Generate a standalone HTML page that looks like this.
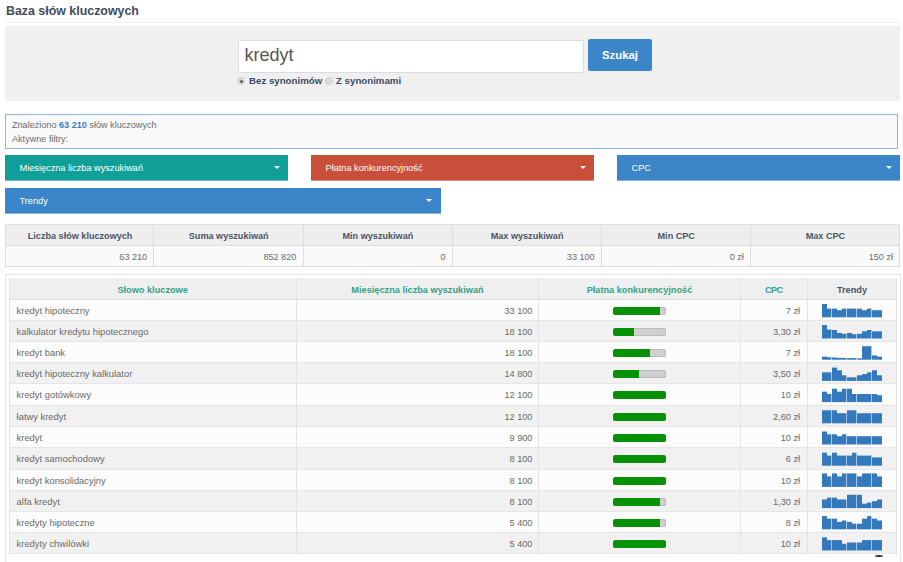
<!DOCTYPE html>
<html><head><meta charset="utf-8">
<style>
*{box-sizing:border-box;margin:0;padding:0}
html,body{width:903px;height:562px;overflow:hidden;background:#fff;font-family:"Liberation Sans",sans-serif;position:relative}
.abs{position:absolute}
.title{left:6px;top:2.5px;font-size:12.4px;font-weight:bold;color:#3d4b60;line-height:16px;white-space:nowrap}
.hr{left:5px;top:22px;width:895px;height:1px;background:#efefef}
.panel{left:5px;top:26px;width:895px;height:75px;background:#f0f0f0}
.inp{left:237.5px;top:39.5px;width:346px;height:33px;background:#fff;border:1px solid #dcdcdc;border-radius:2px}
.inptxt{left:244.5px;top:45px;font-size:18px;color:#555;line-height:20px}
.btn{left:588px;top:39px;width:64px;height:32px;background:#3a86c8;border-radius:2px;color:#fff;font-weight:bold;font-size:11.4px;text-align:center;line-height:32px}
.radio{width:8px;height:8px;border-radius:50%;border:1px solid #d0d0d0;background:#dcdcdc}
.radio.on::after{content:"";position:absolute;left:1.5px;top:1.5px;width:3px;height:3px;border-radius:50%;background:#555}
.rlbl{font-size:9.7px;font-weight:bold;color:#3d4b60;line-height:12px;white-space:nowrap}
.fbox{left:5px;top:114px;width:893px;height:34.5px;border:1px solid #8db6e0;background:#fafafa}
.ftxt{left:12px;font-size:9.1px;color:#6a6a6a;line-height:12px;white-space:nowrap}
.ftxt b{color:#3a7dc0}
.dd{height:25.5px;color:#fff;font-size:9.2px;line-height:26.5px;padding-left:14.5px;white-space:nowrap}
.dd .car{position:absolute;right:8.5px;top:11px;width:0;height:0;border-left:3px solid transparent;border-right:3px solid transparent;border-top:3px solid #fff}
.teal{background:#0f9f98;border-bottom:1px solid #5fc1bb}
.red{background:#c94f3a;border-bottom:1px solid #de8f82}
.blue{background:#3a86c8;border-bottom:1px solid #86b5de}
.sum{left:5px;top:224px;width:895px;height:43px;border:1px solid #dedede}
.sum .c{position:absolute;top:0;height:100%;border-left:1px solid #dedede}
.sum .h{position:absolute;left:0;top:0;width:100%;height:21px;background:#eeeeee;border-bottom:1px solid #dedede}
.sum .ht{position:absolute;top:0.5px;height:21px;line-height:21px;text-align:center;font-weight:bold;font-size:9.1px;color:#4a5466;white-space:nowrap}
.sum .dt{position:absolute;top:22.3px;height:20px;line-height:20px;text-align:right;font-size:9.1px;color:#6a6a6a;padding-right:7px;white-space:nowrap}
.sum .d{position:absolute;left:0;top:21px;width:100%;height:20px;background:#fafafa}
.box{left:5px;top:274px;width:895.5px;height:300px;border:1px solid #e4e4e4}
.thead{left:9.3px;top:278px;width:887px;height:21.5px;background:#efefef;border-bottom:1px solid #dedede}
.th{position:absolute;top:1.5px;height:21.5px;line-height:21.5px;text-align:center;font-weight:bold;font-size:9.2px;color:#36a286;white-space:nowrap}
.tr{position:absolute;left:9.3px;width:887px;height:21.17px;border-bottom:1px solid #e6e6e6}
.tr.odd{background:#fcfcfc}
.tr.even{background:#f1f1f1}
.td{position:absolute;top:1px;height:20.5px;line-height:20.5px;font-size:9.4px;color:#6a6a6a;white-space:nowrap}
.kw{left:7.3px}
.vol{left:286.7px;width:243px;text-align:right;padding-right:6.5px;font-size:9.2px}
.bar{left:529.7px;width:201px}
.pb{position:absolute;left:74.5px;top:5.5px;width:52.5px;height:8.5px;border-radius:2.5px;background:#d0d0d0;box-shadow:inset 0 0 0 1px #bababa;overflow:hidden}
.pf{position:absolute;left:0;top:0;bottom:0;background:#069106}
.cpc{left:730.7px;width:67.6px;text-align:right;padding-right:7.5px;font-size:9.2px}
.tr5{left:812.7px;top:4.5px}
.sp{display:block;fill:#3579bd}
.vl{position:absolute;top:278px;width:1px;height:277px;background:#e4e4e4}
</style></head><body>
<div class="abs title">Baza słów kluczowych</div>
<div class="abs hr"></div>
<div class="abs panel"></div>
<div class="abs inp"></div>
<div class="abs inptxt">kredyt</div>
<div class="abs btn">Szukaj</div>
<div class="abs radio on" style="left:237px;top:77px"></div>
<div class="abs rlbl" style="left:249px;top:75px">Bez synonimów</div>
<div class="abs radio" style="left:325px;top:77px"></div>
<div class="abs rlbl" style="left:336px;top:75px">Z synonimami</div>

<div class="abs fbox"></div>
<div class="abs ftxt" style="top:119px">Znaleziono <b>63 210</b> słów kluczowych</div>
<div class="abs ftxt" style="top:133px">Aktywne filtry:</div>

<div class="abs dd teal" style="left:5px;top:155px;width:283px">Miesięczna liczba wyszukiwań<span class="car"></span></div>
<div class="abs dd red" style="left:311px;top:155px;width:283px">Płatna konkurencyjność<span class="car"></span></div>
<div class="abs dd blue" style="left:617px;top:155px;width:283px">CPC<span class="car"></span></div>
<div class="abs dd blue" style="left:5px;top:188px;width:435.5px">Trendy<span class="car"></span></div>

<div class="abs sum">
 <div class="h"></div><div class="d"></div>
 <div class="c" style="left:147px"></div><div class="c" style="left:296.5px"></div><div class="c" style="left:446px"></div><div class="c" style="left:595px"></div><div class="c" style="left:744px"></div>
 <div class="ht" style="left:0;width:148.2px">Liczba słów kluczowych</div>
 <div class="ht" style="left:148.2px;width:149.1px">Suma wyszukiwań</div>
 <div class="ht" style="left:297.3px;width:149.2px">Min wyszukiwań</div>
 <div class="ht" style="left:446.5px;width:149.2px">Max wyszukiwań</div>
 <div class="ht" style="left:595.7px;width:149.1px">Min CPC</div>
 <div class="ht" style="left:744.8px;width:149.2px">Max CPC</div>
 <div class="dt" style="left:0;width:148.2px">63 210</div>
 <div class="dt" style="left:148.2px;width:149.1px">852 820</div>
 <div class="dt" style="left:297.3px;width:149.2px">0</div>
 <div class="dt" style="left:446.5px;width:149.2px">33 100</div>
 <div class="dt" style="left:595.7px;width:149.1px">0 zł</div>
 <div class="dt" style="left:744.8px;width:149.2px">150 zł</div>
</div>

<div class="abs box"></div>
<div class="abs thead">
 <div class="th" style="left:0;width:286.7px">Słowo kluczowe</div>
 <div class="th" style="left:286.7px;width:243px">Miesięczna liczba wyszukiwań</div>
 <div class="th" style="left:529.7px;width:201px">Płatna konkurencyjność</div>
 <div class="th" style="left:730.7px;width:67.6px;letter-spacing:-0.6px">CPC</div>
 <div class="th" style="left:798.3px;width:88.7px;color:#4a5466">Trendy</div>
</div>
<div class="tr odd" style="top:300px;height:21px"><div class="td kw">kredyt hipoteczny</div><div class="td vol">33 100</div><div class="td bar"><div class="pb"><div class="pf" style="width:89%"></div></div></div><div class="td cpc">7 zł</div></div>
<div class="tr even" style="top:321px;height:21px"><div class="td kw">kalkulator kredytu hipotecznego</div><div class="td vol">18 100</div><div class="td bar"><div class="pb"><div class="pf" style="width:40%"></div></div></div><div class="td cpc">3,30 zł</div></div>
<div class="tr odd" style="top:342px;height:21px"><div class="td kw">kredyt bank</div><div class="td vol">18 100</div><div class="td bar"><div class="pb"><div class="pf" style="width:70%"></div></div></div><div class="td cpc">7 zł</div></div>
<div class="tr even" style="top:363px;height:21px"><div class="td kw">kredyt hipoteczny kalkulator</div><div class="td vol">14 800</div><div class="td bar"><div class="pb"><div class="pf" style="width:49%"></div></div></div><div class="td cpc">3,50 zł</div></div>
<div class="tr odd" style="top:384px;height:22px"><div class="td kw">kredyt gotówkowy</div><div class="td vol">12 100</div><div class="td bar"><div class="pb"><div class="pf" style="width:100%"></div></div></div><div class="td cpc">10 zł</div></div>
<div class="tr even" style="top:406px;height:21px"><div class="td kw">łatwy kredyt</div><div class="td vol">12 100</div><div class="td bar"><div class="pb"><div class="pf" style="width:100%"></div></div></div><div class="td cpc">2,60 zł</div></div>
<div class="tr odd" style="top:427px;height:21px"><div class="td kw">kredyt</div><div class="td vol">9 900</div><div class="td bar"><div class="pb"><div class="pf" style="width:100%"></div></div></div><div class="td cpc">10 zł</div></div>
<div class="tr even" style="top:448px;height:22px"><div class="td kw">kredyt samochodowy</div><div class="td vol">8 100</div><div class="td bar"><div class="pb"><div class="pf" style="width:100%"></div></div></div><div class="td cpc">6 zł</div></div>
<div class="tr odd" style="top:470px;height:21px"><div class="td kw">kredyt konsolidacyjny</div><div class="td vol">8 100</div><div class="td bar"><div class="pb"><div class="pf" style="width:100%"></div></div></div><div class="td cpc">10 zł</div></div>
<div class="tr even" style="top:491px;height:21px"><div class="td kw">alfa kredyt</div><div class="td vol">8 100</div><div class="td bar"><div class="pb"><div class="pf" style="width:89%"></div></div></div><div class="td cpc">1,30 zł</div></div>
<div class="tr odd" style="top:512px;height:21px"><div class="td kw">kredyty hipoteczne</div><div class="td vol">5 400</div><div class="td bar"><div class="pb"><div class="pf" style="width:89%"></div></div></div><div class="td cpc">8 zł</div></div>
<div class="tr even" style="top:533px;height:21px"><div class="td kw">kredyty chwilówki</div><div class="td vol">5 400</div><div class="td bar"><div class="pb"><div class="pf" style="width:100%"></div></div></div><div class="td cpc">10 zł</div></div>

<svg class="abs sp" style="left:822px;top:290px" width="62" height="270" viewBox="0 0 62 270"><rect x="0" y="14.00" width="5" height="13.30"/><rect x="5" y="18.60" width="4.4" height="8.70"/><rect x="10" y="18.60" width="5" height="8.70"/><rect x="15" y="20.20" width="5" height="7.10"/><rect x="20" y="18.60" width="4.4" height="8.70"/><rect x="25" y="18.60" width="5" height="8.70"/><rect x="30" y="18.60" width="4.4" height="8.70"/><rect x="35" y="18.60" width="5" height="8.70"/><rect x="40" y="20.20" width="5" height="7.10"/><rect x="45" y="18.60" width="4.4" height="8.70"/><rect x="50" y="20.20" width="5" height="7.10"/><rect x="55" y="20.20" width="5" height="7.10"/><rect x="0" y="35.00" width="5" height="13.50"/><rect x="5" y="39.60" width="4.4" height="8.90"/><rect x="10" y="40.00" width="5" height="8.50"/><rect x="15" y="42.90" width="5" height="5.60"/><rect x="20" y="43.80" width="4.4" height="4.70"/><rect x="25" y="42.90" width="5" height="5.60"/><rect x="30" y="44.20" width="4.4" height="4.30"/><rect x="35" y="43.80" width="5" height="4.70"/><rect x="40" y="41.30" width="5" height="7.20"/><rect x="45" y="40.00" width="4.4" height="8.50"/><rect x="50" y="41.30" width="5" height="7.20"/><rect x="55" y="41.30" width="5" height="7.20"/><rect x="0" y="66.60" width="5" height="3.10"/><rect x="5" y="67.20" width="4.4" height="2.50"/><rect x="10" y="67.50" width="5" height="2.20"/><rect x="15" y="67.90" width="5" height="1.80"/><rect x="20" y="67.90" width="4.4" height="1.80"/><rect x="25" y="68.10" width="5" height="1.60"/><rect x="30" y="68.10" width="4.4" height="1.60"/><rect x="35" y="68.30" width="5" height="1.40"/><rect x="40" y="56.20" width="5" height="13.50"/><rect x="45" y="56.20" width="4.4" height="13.50"/><rect x="50" y="65.40" width="5" height="4.30"/><rect x="55" y="66.60" width="5" height="3.10"/><rect x="0" y="82.30" width="5" height="8.60"/><rect x="5" y="82.30" width="4.4" height="8.60"/><rect x="10" y="77.60" width="5" height="13.30"/><rect x="15" y="80.30" width="5" height="10.60"/><rect x="20" y="85.30" width="4.4" height="5.60"/><rect x="25" y="87.30" width="5" height="3.60"/><rect x="30" y="87.30" width="4.4" height="3.60"/><rect x="35" y="85.30" width="5" height="5.60"/><rect x="40" y="84.00" width="5" height="6.90"/><rect x="45" y="82.30" width="4.4" height="8.60"/><rect x="50" y="80.30" width="5" height="10.60"/><rect x="55" y="85.30" width="5" height="5.60"/><rect x="0" y="101.70" width="5" height="10.40"/><rect x="5" y="104.00" width="4.4" height="8.10"/><rect x="10" y="98.70" width="5" height="13.40"/><rect x="15" y="101.70" width="5" height="10.40"/><rect x="20" y="98.70" width="4.4" height="13.40"/><rect x="25" y="98.70" width="5" height="13.40"/><rect x="30" y="104.00" width="4.4" height="8.10"/><rect x="35" y="104.00" width="5" height="8.10"/><rect x="40" y="104.00" width="5" height="8.10"/><rect x="45" y="104.00" width="4.4" height="8.10"/><rect x="50" y="104.00" width="5" height="8.10"/><rect x="55" y="105.20" width="5" height="6.90"/><rect x="0" y="120.30" width="5" height="13.00"/><rect x="5" y="120.30" width="4.4" height="13.00"/><rect x="10" y="120.30" width="5" height="13.00"/><rect x="15" y="123.20" width="5" height="10.10"/><rect x="20" y="123.20" width="4.4" height="10.10"/><rect x="25" y="120.30" width="5" height="13.00"/><rect x="30" y="120.30" width="4.4" height="13.00"/><rect x="35" y="123.20" width="5" height="10.10"/><rect x="40" y="123.20" width="5" height="10.10"/><rect x="45" y="123.20" width="4.4" height="10.10"/><rect x="50" y="123.20" width="5" height="10.10"/><rect x="55" y="123.20" width="5" height="10.10"/><rect x="0" y="141.50" width="5" height="13.00"/><rect x="5" y="144.30" width="4.4" height="10.20"/><rect x="10" y="144.30" width="5" height="10.20"/><rect x="15" y="146.20" width="5" height="8.30"/><rect x="20" y="144.30" width="4.4" height="10.20"/><rect x="25" y="146.20" width="5" height="8.30"/><rect x="30" y="146.20" width="4.4" height="8.30"/><rect x="35" y="146.20" width="5" height="8.30"/><rect x="40" y="146.20" width="5" height="8.30"/><rect x="45" y="146.20" width="4.4" height="8.30"/><rect x="50" y="146.20" width="5" height="8.30"/><rect x="55" y="146.20" width="5" height="8.30"/><rect x="0" y="162.70" width="5" height="13.00"/><rect x="5" y="165.60" width="4.4" height="10.10"/><rect x="10" y="162.70" width="5" height="13.00"/><rect x="15" y="165.60" width="5" height="10.10"/><rect x="20" y="165.60" width="4.4" height="10.10"/><rect x="25" y="165.60" width="5" height="10.10"/><rect x="30" y="162.70" width="4.4" height="13.00"/><rect x="35" y="165.60" width="5" height="10.10"/><rect x="40" y="165.60" width="5" height="10.10"/><rect x="45" y="165.60" width="4.4" height="10.10"/><rect x="50" y="167.40" width="5" height="8.30"/><rect x="55" y="167.40" width="5" height="8.30"/><rect x="0" y="183.40" width="5" height="13.50"/><rect x="5" y="186.40" width="4.4" height="10.50"/><rect x="10" y="183.40" width="5" height="13.50"/><rect x="15" y="186.40" width="5" height="10.50"/><rect x="20" y="183.40" width="4.4" height="13.50"/><rect x="25" y="183.40" width="5" height="13.50"/><rect x="30" y="183.40" width="4.4" height="13.50"/><rect x="35" y="186.40" width="5" height="10.50"/><rect x="40" y="183.40" width="5" height="13.50"/><rect x="45" y="183.40" width="4.4" height="13.50"/><rect x="50" y="183.40" width="5" height="13.50"/><rect x="55" y="186.40" width="5" height="10.50"/><rect x="0" y="209.50" width="5" height="8.60"/><rect x="5" y="207.60" width="4.4" height="10.50"/><rect x="10" y="207.60" width="5" height="10.50"/><rect x="15" y="209.50" width="5" height="8.60"/><rect x="20" y="209.50" width="4.4" height="8.60"/><rect x="25" y="204.80" width="5" height="13.30"/><rect x="30" y="204.80" width="4.4" height="13.30"/><rect x="35" y="204.80" width="5" height="13.30"/><rect x="40" y="213.70" width="5" height="4.40"/><rect x="45" y="212.50" width="4.4" height="5.60"/><rect x="50" y="211.20" width="5" height="6.90"/><rect x="55" y="209.50" width="5" height="8.60"/><rect x="0" y="226.10" width="5" height="13.20"/><rect x="5" y="228.70" width="4.4" height="10.60"/><rect x="10" y="228.70" width="5" height="10.60"/><rect x="15" y="231.90" width="5" height="7.40"/><rect x="20" y="230.50" width="4.4" height="8.80"/><rect x="25" y="231.90" width="5" height="7.40"/><rect x="30" y="233.70" width="4.4" height="5.60"/><rect x="35" y="233.70" width="5" height="5.60"/><rect x="40" y="228.70" width="5" height="10.60"/><rect x="45" y="226.10" width="4.4" height="13.20"/><rect x="50" y="228.70" width="5" height="10.60"/><rect x="55" y="230.50" width="5" height="8.80"/><rect x="0" y="247.40" width="5" height="13.10"/><rect x="5" y="250.10" width="4.4" height="10.40"/><rect x="10" y="250.10" width="5" height="10.40"/><rect x="15" y="250.10" width="5" height="10.40"/><rect x="20" y="253.80" width="4.4" height="6.70"/><rect x="25" y="252.50" width="5" height="8.00"/><rect x="30" y="252.50" width="4.4" height="8.00"/><rect x="35" y="252.50" width="5" height="8.00"/><rect x="40" y="250.10" width="5" height="10.40"/><rect x="45" y="250.10" width="4.4" height="10.40"/><rect x="50" y="250.10" width="5" height="10.40"/><rect x="55" y="250.10" width="5" height="10.40"/></svg>
<div class="vl" style="left:9px"></div>
<div class="vl" style="left:296px"></div>
<div class="vl" style="left:538px"></div>
<div class="vl" style="left:739.5px"></div>
<div class="vl" style="left:807px"></div>
<div class="vl" style="left:896px"></div>
<div class="abs" style="left:874.5px;top:554.5px;width:8px;height:2px;border-radius:50%;background:#333"></div>
</body></html>
